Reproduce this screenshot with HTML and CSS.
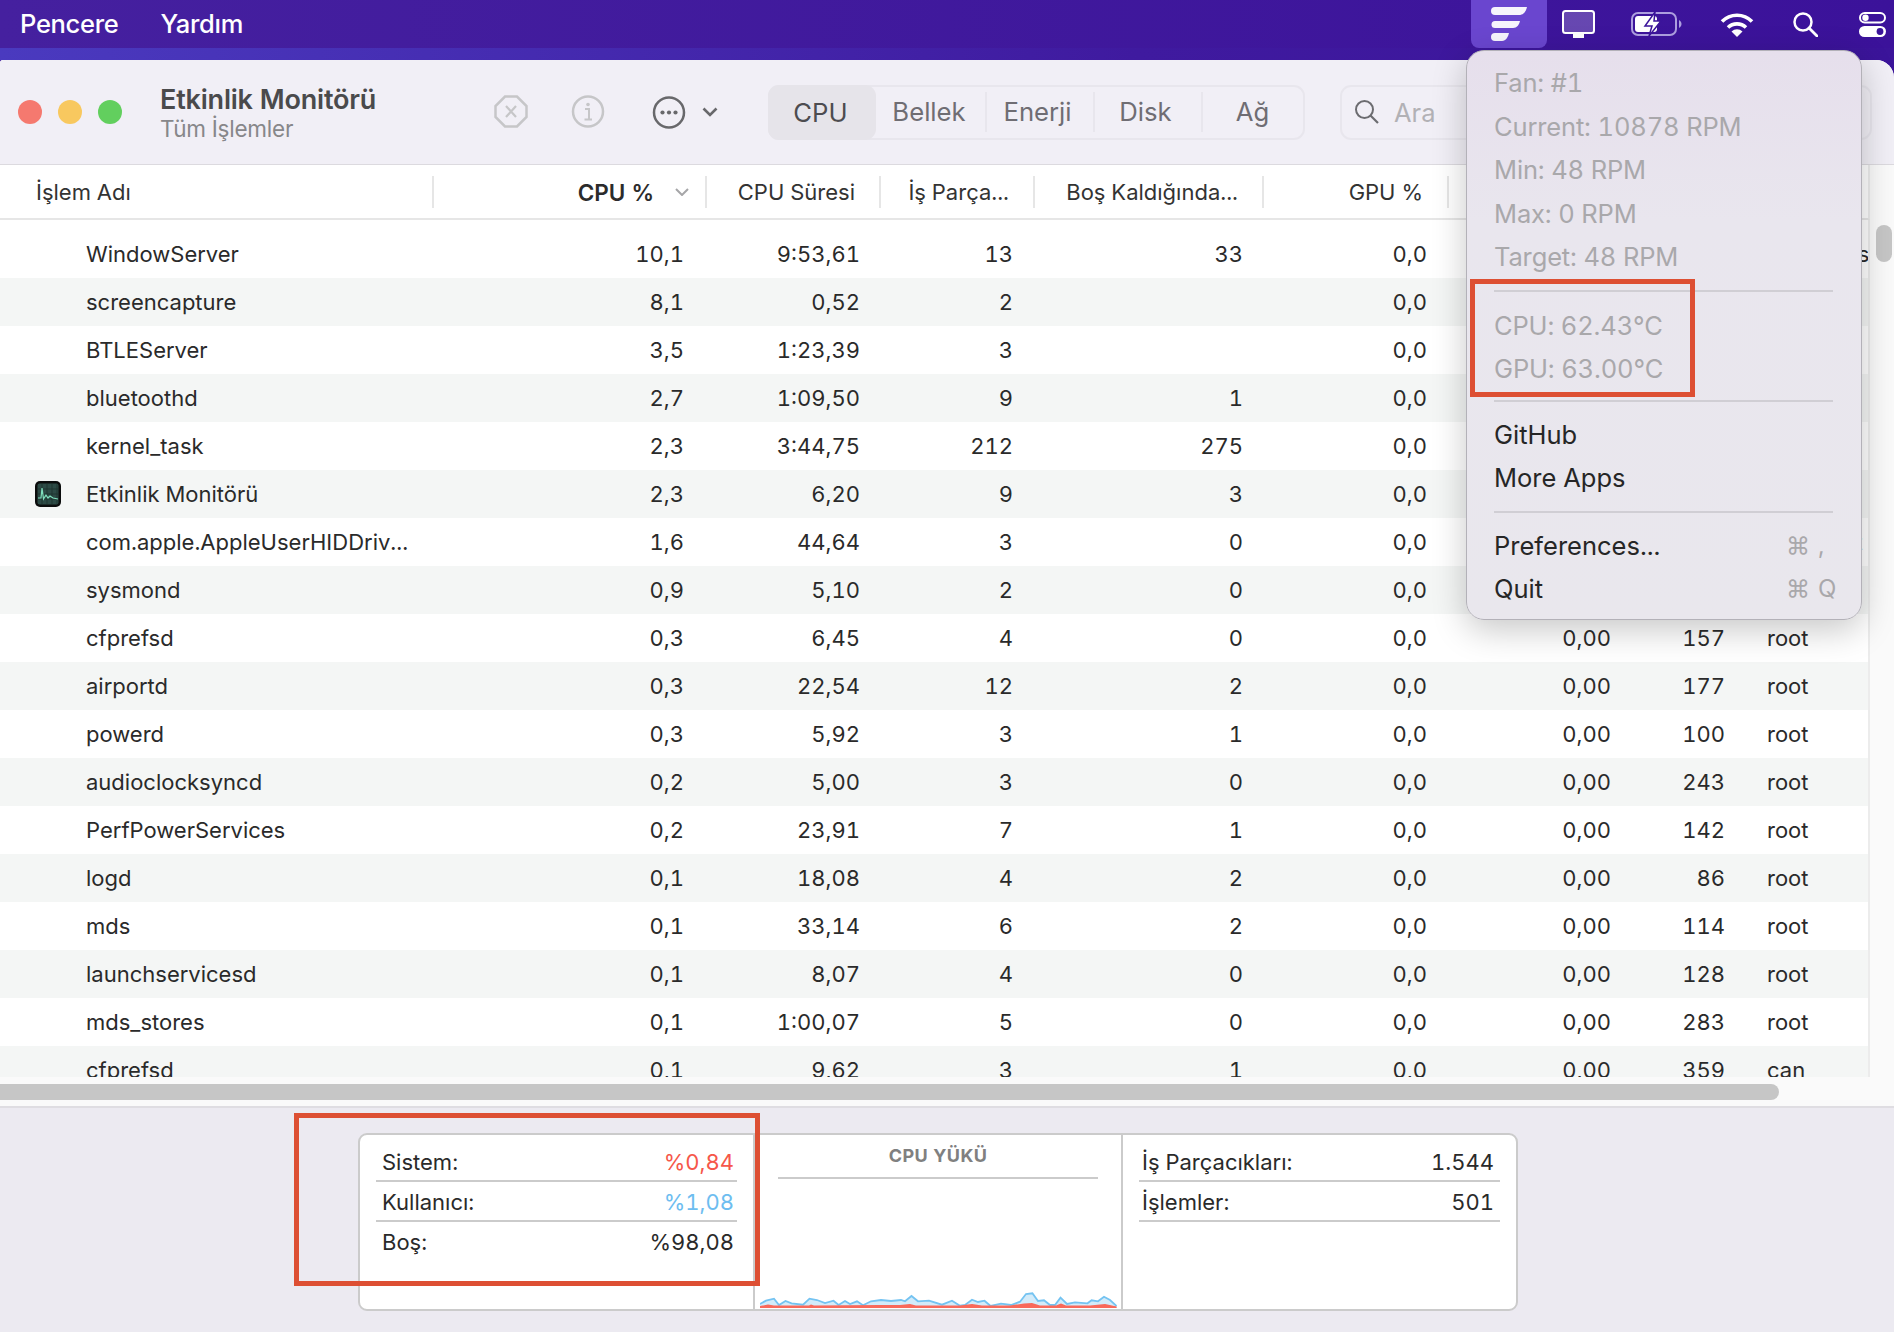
FILE: index.html
```html
<!DOCTYPE html>
<html lang="tr">
<head>
<meta charset="utf-8">
<title>Etkinlik Monitörü</title>
<link rel="stylesheet" href="styles.css">
</head>
<body>
<div class="desktop">
  <header class="menubar">
    <nav class="menus"><span>Pencere</span><span>Yardım</span></nav>
    <div class="status">
      <div class="status-active">
        <svg width="36" height="34" viewBox="0 0 36 34"><path class="w" d="M4 0H36C35 4 33 8 28 8H4A4 4 0 0 1 4 0Z"/><path class="w" d="M4 14H29C28 18 26 21 22 21H4A3.5 3.5 0 0 1 4 14Z"/><path class="w" d="M4 26H18C17 30 15 34 11 34H4A4 4 0 0 1 4 26Z"/></svg>
      </div>
      <svg class="st-monitor" width="33" height="28" viewBox="0 0 33 28"><rect x="1" y="1" width="31" height="22" rx="2.5" fill="#fff" fill-opacity=".22" stroke="#fff" stroke-width="2"/><rect x="11" y="23" width="11" height="5" fill="#fff"/></svg>
      <svg class="st-battery" width="51" height="24" viewBox="0 0 51 24"><rect x="1" y="1" width="44" height="22" rx="6" fill="none" stroke="#ad9edf" stroke-width="2"/><rect x="4" y="4" width="22" height="16" rx="3" fill="#fff"/><path d="M48 8C50 9 50.500 11 50.500 12S50 15 48 16Z" fill="#ad9edf"/><path d="M24 0L14 14H21L18 24L30 9H23Z" fill="#fff" stroke="#3b149a" stroke-width="1.500"/></svg>
      <svg class="st-wifi" width="34" height="25" viewBox="0 0 34 25"><path d="M2 9.500A21 21 0 0 1 32 9.500M8 15.500A13 13 0 0 1 26 15.500" fill="none" stroke="#fff" stroke-width="3.600"/><path d="M17 25L11.500 19.500A8 8 0 0 1 22.500 19.500Z" fill="#fff"/></svg>
      <svg class="st-search" width="25" height="25" viewBox="0 0 25 25"><circle cx="10" cy="10" r="8.500" fill="none" stroke="#fff" stroke-width="2.500"/><path d="M16 16L24 24" stroke="#fff" stroke-width="2.800" stroke-linecap="round"/></svg>
      <svg class="st-control" width="27" height="25" viewBox="0 0 27 25"><rect x="1" y="1" width="25" height="9.500" rx="4.750" fill="none" stroke="#fff" stroke-width="2"/><circle cx="6.500" cy="5.750" r="3.200" fill="#fff"/><rect y="14" width="27" height="11" rx="5.500" fill="#fff"/><circle cx="21" cy="19.500" r="3.400" fill="#3b149a"/></svg>
    </div>
  </header>
  <div class="strip"></div>

  <main class="window">
    <section class="toolbar">
      <div class="lights"><i class="red"></i><i class="yellow"></i><i class="green"></i></div>
      <div class="title"><strong>Etkinlik Monitörü</strong><span>Tüm İşlemler</span></div>
      <svg class="tool-icon dim" width="34" height="33" viewBox="0 0 34 33"><path d="M11 1.500H23L32.500 11V22L23 31.500H11L1.500 22V11Z" fill="none" stroke="#c6c6c8" stroke-width="2.500"/><path d="M12 11L22 22M22 11L12 22" stroke="#c6c6c8" stroke-width="2.200"/></svg>
      <svg class="tool-icon dim info" width="34" height="33" viewBox="0 0 34 33"><circle cx="17" cy="16.500" r="15" fill="none" stroke="#c6c6c8" stroke-width="2.500"/><circle cx="17" cy="9.500" r="1.800" fill="#c6c6c8"/><path d="M14 14H18V24M13.500 24.500H21" fill="none" stroke="#c6c6c8" stroke-width="2"/></svg>
      <svg class="tool-icon more" width="34" height="33" viewBox="0 0 34 33"><circle cx="17" cy="16.500" r="15" fill="none" stroke="#68686b" stroke-width="2.500"/><circle cx="10.500" cy="16.500" r="2.100" fill="#68686b"/><circle cx="17" cy="16.500" r="2.100" fill="#68686b"/><circle cx="23.500" cy="16.500" r="2.100" fill="#68686b"/></svg>
      <svg class="tool-chevron" width="16" height="10" viewBox="0 0 16 10"><path d="M1.500 1.500L8 8L14.500 1.500" fill="none" stroke="#68686b" stroke-width="2.600"/></svg>
      <div class="segments">
        <span class="selected">CPU</span><span>Bellek</span><span class="divided">Enerji</span><span class="divided">Disk</span><span class="divided">Ağ</span>
      </div>
      <div class="searchbox">
        <svg width="26" height="26" viewBox="0 0 26 26"><circle cx="10.500" cy="10.500" r="8.500" fill="none" stroke="#6c6c70" stroke-width="2"/><path d="M16.500 16.500L24 24" stroke="#6c6c70" stroke-width="2.200"/></svg>
        <span>Ara</span>
      </div>
    </section>

    <section class="content">
      <div class="thead">
        <div class="th name">İşlem Adı</div>
        <div class="th sorted">CPU %<svg width="14" height="8" viewBox="0 0 14 8"><path d="M1 1L7 7L13 1" fill="none" stroke="#a6a6a8" stroke-width="2"/></svg></div>
        <div class="th">CPU Süresi</div>
        <div class="th">İş Parça...</div>
        <div class="th">Boş Kaldığında...</div>
        <div class="th">GPU %</div>
      </div>
      <div class="tbody">
        <div class="row"><span class="n">WindowServer</span><span>10,1</span><span>9:53,61</span><span>13</span><span>33</span><span>0,0</span><span></span><span></span><span class="u">_windowserver</span></div>
        <div class="row"><span class="n">screencapture</span><span>8,1</span><span>0,52</span><span>2</span><span></span><span>0,0</span><span></span><span></span><span class="u"></span></div>
        <div class="row"><span class="n">BTLEServer</span><span>3,5</span><span>1:23,39</span><span>3</span><span></span><span>0,0</span><span></span><span></span><span class="u"></span></div>
        <div class="row"><span class="n">bluetoothd</span><span>2,7</span><span>1:09,50</span><span>9</span><span>1</span><span>0,0</span><span></span><span></span><span class="u"></span></div>
        <div class="row"><span class="n">kernel_task</span><span>2,3</span><span>3:44,75</span><span>212</span><span>275</span><span>0,0</span><span></span><span></span><span class="u"></span></div>
        <div class="row"><span class="n"><svg class="app-icon" width="26" height="26" viewBox="0 0 26 26"><rect width="26" height="26" rx="5" fill="#0b0d0d"/><rect x="2.500" y="2.500" width="21" height="21" rx="2" fill="#2c4a45"/><path d="M7 3V23M12 3V23M17 3V23M22 3V23M3 8H23M3 13H23M3 18H23" stroke="#1d332f" stroke-width=".8"/><path d="M3 17H6L7 7L8.500 18L11 14L13 17L15 15L18 17L23 18" fill="none" stroke="#7fe0bd" stroke-width="1.200"/></svg>Etkinlik Monitörü</span><span>2,3</span><span>6,20</span><span>9</span><span>3</span><span>0,0</span><span></span><span></span><span class="u"></span></div>
        <div class="row"><span class="n">com.apple.AppleUserHIDDriv...</span><span>1,6</span><span>44,64</span><span>3</span><span>0</span><span>0,0</span><span></span><span></span><span class="u">_driverkit</span></div>
        <div class="row"><span class="n">sysmond</span><span>0,9</span><span>5,10</span><span>2</span><span>0</span><span>0,0</span><span></span><span></span><span class="u"></span></div>
        <div class="row"><span class="n">cfprefsd</span><span>0,3</span><span>6,45</span><span>4</span><span>0</span><span>0,0</span><span>0,00</span><span>157</span><span class="u">root</span></div>
        <div class="row"><span class="n">airportd</span><span>0,3</span><span>22,54</span><span>12</span><span>2</span><span>0,0</span><span>0,00</span><span>177</span><span class="u">root</span></div>
        <div class="row"><span class="n">powerd</span><span>0,3</span><span>5,92</span><span>3</span><span>1</span><span>0,0</span><span>0,00</span><span>100</span><span class="u">root</span></div>
        <div class="row"><span class="n">audioclocksyncd</span><span>0,2</span><span>5,00</span><span>3</span><span>0</span><span>0,0</span><span>0,00</span><span>243</span><span class="u">root</span></div>
        <div class="row"><span class="n">PerfPowerServices</span><span>0,2</span><span>23,91</span><span>7</span><span>1</span><span>0,0</span><span>0,00</span><span>142</span><span class="u">root</span></div>
        <div class="row"><span class="n">logd</span><span>0,1</span><span>18,08</span><span>4</span><span>2</span><span>0,0</span><span>0,00</span><span>86</span><span class="u">root</span></div>
        <div class="row"><span class="n">mds</span><span>0,1</span><span>33,14</span><span>6</span><span>2</span><span>0,0</span><span>0,00</span><span>114</span><span class="u">root</span></div>
        <div class="row"><span class="n">launchservicesd</span><span>0,1</span><span>8,07</span><span>4</span><span>0</span><span>0,0</span><span>0,00</span><span>128</span><span class="u">root</span></div>
        <div class="row"><span class="n">mds_stores</span><span>0,1</span><span>1:00,07</span><span>5</span><span>0</span><span>0,0</span><span>0,00</span><span>283</span><span class="u">root</span></div>
        <div class="row"><span class="n">cfprefsd</span><span>0,1</span><span>9,62</span><span>3</span><span>1</span><span>0,0</span><span>0,00</span><span>359</span><span class="u">can</span></div>
      </div>
      <div class="hscroll"><div class="hthumb"></div></div>
      <div class="vscroll"><div class="vthumb"></div></div>
    </section>

    <footer class="footer">
      <div class="panel">
        <div class="col col-left">
          <div class="stat"><span>Sistem:</span><span class="sys">%0,84</span></div>
          <div class="stat"><span>Kullanıcı:</span><span class="usr">%1,08</span></div>
          <div class="stat plain"><span>Boş:</span><span>%98,08</span></div>
        </div>
        <div class="col col-mid">
          <div class="load-title">CPU YÜKÜ</div>
          <svg class="chart" width="357" height="18" viewBox="0 0 357 18">
            <polygon fill="#d3ebf9" points="0,14 6,10.700 14,8.700 19,15 25.500,11 31.600,13.300 43,14.700 49.500,8.700 57,10 65,13 73.500,10.700 78.600,15 85,11 90,14 97,11.300 103,15.300 111,11.300 121,10 131,11 141,10 145,11.300 151.500,6 158,11.300 169,10.700 182,14.700 192,10.700 200,15.700 205,15 212,9.700 218,12 224.500,10.700 230.600,16 241,13.700 251,15 260,11.700 266,4 272.400,3.300 278,11 284,10.300 290,15 295,15 300.500,7.700 307,14 315,12.300 327.500,13.300 331.600,10.300 338,11.300 344,6.700 350,10 356.600,16 356.600,18 0,18"/>
            <polyline fill="none" stroke="#74c3f1" stroke-width="1.800" points="0,14 6,10.700 14,8.700 19,15 25.500,11 31.600,13.300 43,14.700 49.500,8.700 57,10 65,13 73.500,10.700 78.600,15 85,11 90,14 97,11.300 103,15.300 111,11.300 121,10 131,11 141,10 145,11.300 151.500,6 158,11.300 169,10.700 182,14.700 192,10.700 200,15.700 205,15 212,9.700 218,12 224.500,10.700 230.600,16 241,13.700 251,15 260,11.700 266,4 272.400,3.300 278,11 284,10.300 290,15 295,15 300.500,7.700 307,14 315,12.300 327.500,13.300 331.600,10.300 338,11.300 344,6.700 350,10 356.600,16"/>
            <polygon fill="#f9695a" points="0,16 8,14.500 14,15.500 49,15.500 51,14.500 54,15.500 120,15 140,15 150,14 156,15.500 200,15.500 212,14 222,15.500 250,15.500 264,13.500 272,13 280,15.500 296,15.500 301,13.500 306,15.500 330,15.500 345,14 356.600,16.500 356.600,18 0,18"/>
          </svg>
        </div>
        <div class="col col-right">
          <div class="stat"><span>İş Parçacıkları:</span><span>1.544</span></div>
          <div class="stat"><span>İşlemler:</span><span>501</span></div>
        </div>
      </div>
    </footer>
  </main>

  <aside class="dropdown">
    <div class="group muted">
      <div>Fan: #1</div>
      <div>Current: 10878 RPM</div>
      <div>Min: 48 RPM</div>
      <div>Max: 0 RPM</div>
      <div>Target: 48 RPM</div>
    </div>
    <div class="group muted tight">
      <div>CPU: 62.43°C</div>
      <div>GPU: 63.00°C</div>
    </div>
    <div class="group">
      <div>GitHub</div>
      <div>More Apps</div>
    </div>
    <div class="group last">
      <div class="item">Preferences...<span class="keys"><b>⌘</b><b>,</b></span></div>
      <div class="item">Quit<span class="keys"><b>⌘</b><b>Q</b></span></div>
    </div>
  </aside>

  <div class="mark mark-temp"></div>
  <div class="mark mark-stats"></div>
</div>
</body>
</html>
```
FILE: styles.css
```css
* { box-sizing: border-box; }
html, body { margin: 0; padding: 0; }
body { width: 1894px; height: 1332px; overflow: hidden; font-family: Inter, "Noto Sans", "Liberation Sans", sans-serif; color: #2a2a2a; font-variant-numeric: tabular-nums; }
.desktop { position: relative; width: 1894px; height: 1332px; display: flex; flex-direction: column; background: #3b149a; }

.menubar { height: 48px; flex: none; display: flex; align-items: stretch; justify-content: space-between; background: linear-gradient(90deg, #45209f, #3b129a); color: #fff; padding-right: 8px; }
.menus { display: flex; align-items: center; gap: 42px; padding: 0 0 2px 20px; font-size: 25.500px; font-weight: 500; letter-spacing: -.3px; }
.status { display: flex; align-items: center; }
.status-active { width: 76px; height: 48px; display: flex; align-items: center; justify-content: center; background: #6a46cf; border-radius: 0 0 8px 8px; }
.w { fill: #fff; fill-opacity: .94; }
.st-monitor { margin-left: 15px; }
.st-battery { margin-left: 36px; }
.st-wifi { margin-left: 38px; }
.st-search { margin-left: 39px; }
.st-control { margin-left: 41px; }

.strip { height: 12px; flex: none; background: linear-gradient(90deg, #4a3abf, #3f1a9f 60%, #3b149a); }

.window { flex: 1; min-height: 0; display: flex; flex-direction: column; background: #fff; border-radius: 3px 18px 0 0; overflow: hidden; }

.toolbar { height: 105px; flex: none; display: flex; align-items: center; padding-left: 18px; background: #f1eff6; border-bottom: 1px solid #dcdadf; }
.lights { display: flex; gap: 16px; }
.lights i { display: block; width: 24px; height: 24px; border-radius: 50%; }
.red { background: #f5796f; }
.yellow { background: #f8c85f; }
.green { background: #62cf5e; }
.title { width: 334px; margin-left: 38px; padding-top: 4px; display: flex; flex-direction: column; line-height: 29px; }
.title strong { font-size: 27px; font-weight: 600; color: #4a4a4c; letter-spacing: -.2px; }
.title span { font-size: 22.500px; color: #87878a; letter-spacing: -.2px; }
.tool-icon { flex: none; }
.dim { margin-top: -2px; }
.info { margin-left: 43px; }
.more { margin-left: 47px; }
.tool-chevron { margin-left: 16px; flex: none; }
.segments { margin-left: 50px; width: 537px; height: 55px; flex: none; display: grid; grid-template-columns: 106px 109px 108px 108px 106px; align-items: center; border: 2px solid #e8e6ed; border-radius: 11px; font-size: 25.700px; color: #6f6d73; text-align: center; }
.segments span { line-height: 40px; padding-right: 3px; }
.segments .selected { height: 55px; margin: -2px 0 -2px -2px; line-height: 55px; background: #e6e4ea; border-radius: 11px; color: #4d4c50; }
.segments .divided { border-left: 2px solid #e8e6ed; padding-right: 5px; }
.searchbox { margin-left: 35px; width: 532px; height: 55px; flex: none; display: flex; align-items: center; gap: 14px; padding-left: 12px; border: 2px solid #e8e6ed; border-radius: 11px; font-size: 25.500px; color: #b2b1b5; }

.content { position: relative; height: 943px; flex: none; background: #fafafa; border-bottom: 2px solid #dfdde2; display: grid; grid-template-rows: 55px 857px 1fr; grid-template-columns: 1870px 1fr; }
.thead { grid-column: 1; display: grid; grid-template-columns: 434px 273px 174px 154px 229px 185px 1fr; align-items: center; height: 55px; padding-top: 1px; background: #fff; border-bottom: 2px solid #e6e6e6; font-size: 22px; color: #333; border-right: 2px solid #ececec; }
.th { height: 32px; display: flex; align-items: center; justify-content: flex-end; padding-right: 24px; border-right: 2px solid #e6e6e6; }
.th.name { justify-content: flex-start; padding-left: 36px; }
.th.sorted { font-size: 22.500px; font-weight: 600; padding-right: 16px; gap: 21px; color: #2b2b2b; }

.tbody { grid-column: 1; grid-row: 2; padding-top: 10px; background: #fff; overflow: hidden; border-right: 2px solid #ececec; }
.row { height: 48px; display: grid; grid-template-columns: 433px 251px 176px 153px 230px 184px 184px 114px 143px; align-items: center; font-size: 22px; white-space: nowrap; }
.row:nth-child(even) { background: #f4f6f5; }
.row span { text-align: right; }
.row .n { text-align: left; padding-left: 86px; position: relative; }
.row .u { text-align: left; padding-left: 42px; overflow: hidden; }
.app-icon { position: absolute; left: 35px; top: 0; }

.hscroll { grid-column: 1 / 3; grid-row: 3; padding-top: 7px; }
.hthumb { width: 1779px; height: 16px; background: #c6c6c6; border-radius: 0 8px 8px 0; }
.vscroll { grid-column: 2; grid-row: 1 / 3; padding: 60px 2px 0 6px; }
.vthumb { height: 37px; background: #c6c6c6; border-radius: 8px; }

.footer { flex: 1; background: #eceaf1; padding: 25px 0 0 358px; }
.panel { width: 1160px; height: 178px; display: grid; grid-template-columns: 395px 368px 1fr; background: #fff; border: 2px solid #cbcbcb; border-radius: 9px; }
.col { display: flex; flex-direction: column; padding-top: 7px; }
.col-left { padding: 7px 16px 0 16px; border-right: 2px solid #cbcbcb; }
.col-mid { padding: 0 3px 1px 3px; align-items: center; border-right: 2px solid #cbcbcb; }
.col-right { padding: 7px 16px 0 16px; }
.stat { height: 40px; display: flex; justify-content: space-between; align-items: center; padding: 1px 3px 0 6px; border-bottom: 2px solid #cbcbcb; font-size: 22px; }
.col-right .stat { padding: 1px 6px 0 3px; }
.stat.plain { border-bottom: 0; padding-top: 0; }
.sys { color: #f6574a; }
.usr { color: #6dbdf0; }
.load-title { width: 320px; height: 44px; flex: none; line-height: 42px; text-align: center; border-bottom: 2px solid #cbcbcb; font-size: 18px; font-weight: 700; color: #808080; letter-spacing: .4px; }
.chart { margin-top: auto; display: block; }

.dropdown { position: absolute; left: 1466px; top: 50px; width: 396px; height: 570px; padding: 10px 28px 0 27px; background: linear-gradient(180deg, #e6dfec, #e9e6ee 30%, #e9e7ed); border: 1px solid #b3b1b8; border-radius: 18px; box-shadow: 0 10px 34px rgba(0,0,0,.22); font-size: 25.500px; line-height: 43.500px; color: #262626; }
.group { padding-bottom: 11px; margin-bottom: 11px; border-bottom: 2px solid #d0ced4; }
.group.muted { letter-spacing: -.15px; }
.group.tight { margin-top: 12px; padding-bottom: 9px; }
.group.last { border-bottom: 0; margin-bottom: 0; }
.muted { color: #a9a8ab; }
.item { display: flex; justify-content: space-between; }
.keys { display: flex; flex: none; width: 49px; gap: 8px; color: #a9a8ab; margin-right: -2px; font-size: 24px; }
.keys b { flex: none; font-weight: 400; }

.mark { position: absolute; border: 5px solid #dd4f33; }
.mark-temp { left: 1470px; top: 279px; width: 225px; height: 118px; }
.mark-stats { left: 294px; top: 1113px; width: 466px; height: 173px; }
```
